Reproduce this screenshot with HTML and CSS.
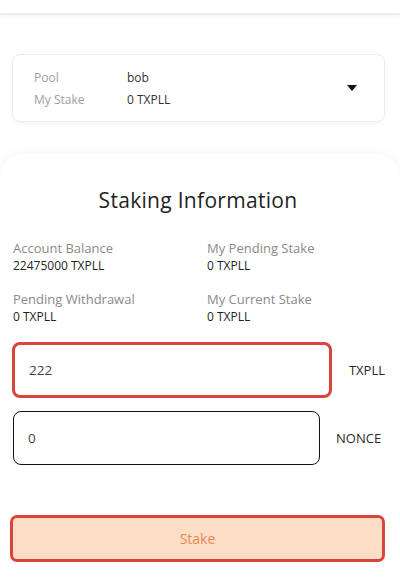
FILE: index.html
```html
<!DOCTYPE html>
<html>
<head>
<meta charset="utf-8">
<link rel="stylesheet" href="styles.css">
</head>
<body>
<div class="header"></div>
<div class="pool-wrap">
  <div class="pool-card">
    <div class="pool-grid">
      <span class="pool-label">Pool</span><span class="pool-value">bob</span>
      <span class="pool-label">My Stake</span><span class="pool-value">0 TXPLL</span>
    </div>
    <svg class="caret" width="10" height="6" viewBox="0 0 10 6"><path d="M0 0H10L5 6Z" fill="#111"/></svg>
  </div>
</div>
<div class="info-card">
  <h1 class="title">Staking Information</h1>
  <div class="stats">
    <div class="stat"><div class="stat-label">Account Balance</div><div class="stat-value">22475000 TXPLL</div></div>
    <div class="stat"><div class="stat-label">My Pending Stake</div><div class="stat-value">0 TXPLL</div></div>
    <div class="stat"><div class="stat-label">Pending Withdrawal</div><div class="stat-value">0 TXPLL</div></div>
    <div class="stat"><div class="stat-label">My Current Stake</div><div class="stat-value">0 TXPLL</div></div>
  </div>
  <div class="field-row">
    <div class="input input-error">222</div>
    <span class="unit unit-a">TXPLL</span>
  </div>
  <div class="field-row">
    <div class="input input-plain">0</div>
    <span class="unit unit-b">NONCE</span>
  </div>
  <button class="stake-btn">Stake</button>
</div>
</body>
</html>
```
FILE: styles.css
```css
* { box-sizing: border-box; }
html, body { margin: 0; padding: 0; background: #fff; }
body {
  font-family: "Open Sans", "Noto Sans", sans-serif;
  width: 400px;
  height: 588px;
  overflow: hidden;
  color: #222;
}
.header {
  height: 15px;
  border-bottom: 2px solid #ececec;
  box-shadow: 0 2px 4px rgba(0,0,0,0.03);
}
.pool-wrap {
  padding: 39px 15px 0 12px;
}
.pool-card {
  height: 68px;
  border: 1px solid #ececec;
  border-radius: 8px;
  box-shadow: 0 2px 6px rgba(0,0,0,0.04);
  display: flex;
  align-items: center;
  justify-content: space-between;
  padding: 0 27px 0 21px;
}
.pool-grid {
  display: grid;
  grid-template-columns: 93px auto;
  row-gap: 5px;
  font-size: 12px;
  line-height: 17px;
}
.pool-label { color: #a0a0a0; }
.pool-value { color: #333; }
.caret { display: block; }
.info-card {
  margin-top: 32px;
  border-radius: 24px 24px 0 0;
  box-shadow: 0 -3px 8px rgba(0,0,0,0.035);
  padding: 31px 15px 0 13px;
  height: 420px;
}
.title {
  margin: 0;
  text-align: center;
  font-weight: 500;
  font-size: 21px;
  line-height: 30px;
  color: #1f1f1f;
  letter-spacing: 0.3px;
  padding-right: 2px;
}
.stats {
  margin-top: 24px;
  display: grid;
  grid-template-columns: 194px auto;
  row-gap: 15px;
}
.stat-label { font-size: 13px; line-height: 18px; color: #8a8a8a; }
.stat-value { font-size: 12px; line-height: 18px; color: #1f1f1f; }
.field-row {
  display: flex;
  align-items: center;
}
.input {
  border-radius: 8px;
  font-size: 13.5px;
  color: #444;
  display: flex;
  align-items: center;
  padding-left: 14px;
}
.input-error {
  margin-top: 16px;
  width: 320px;
  height: 56px;
  margin-left: -1px;
  border: 3px solid #d9443b;
}
.input-plain {
  margin-top: 13px;
  width: 307px;
  height: 54px;
  border: 1px solid #111;
}
.unit { font-size: 13px; color: #2a2a2a; }
.unit-a { margin-left: 17px; margin-top: 16px; }
.unit-b { margin-left: 16px; margin-top: 13px; }
.stake-btn {
  display: block;
  margin: 50px 0 0 -3px;
  width: 375px;
  height: 47px;
  border: 3px solid #d9443b;
  border-radius: 7px;
  background: #fdddc6;
  color: #e58a55;
  font-family: inherit;
  font-size: 14px;
}
```
